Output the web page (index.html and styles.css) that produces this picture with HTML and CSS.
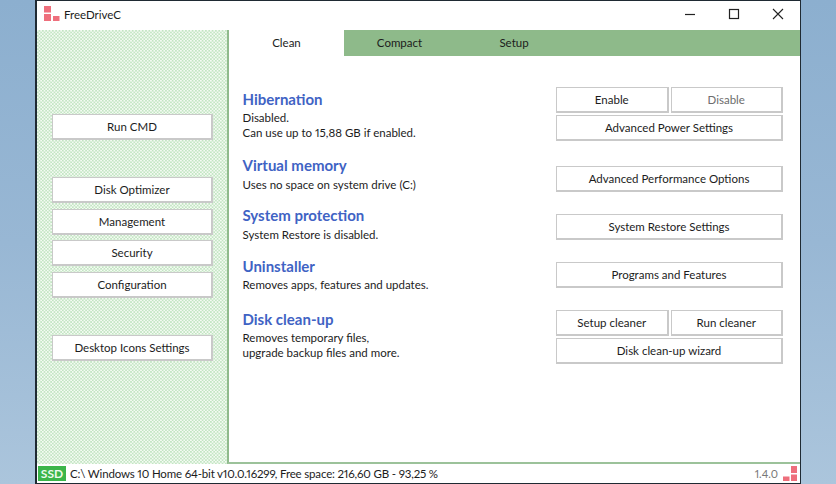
FILE: index.html
```html
<!DOCTYPE html>
<html lang="en">
<head>
<meta charset="utf-8">
<title>FreeDriveC</title>
<link rel="stylesheet" href="styles.css">
</head>
<body>
<div class="window">
  <header class="titlebar">
    <svg class="logo" width="16" height="16" viewBox="0 0 16 16"><path d="M0 0h7v6.500H0zM0 8h7v7H0zM9 10h6.500v5H9z" fill="#ee6f7c"/></svg>
    <span class="app-name">FreeDriveC</span>
    <div class="controls">
      <svg width="12" height="12" viewBox="0 0 12 12"><path d="M1 6.500h10" stroke="#222" stroke-width="1.200" fill="none"/></svg>
      <svg width="12" height="12" viewBox="0 0 12 12"><rect x="1.500" y="1.500" width="9" height="9" stroke="#222" stroke-width="1.200" fill="none"/></svg>
      <svg width="12" height="12" viewBox="0 0 12 12"><path d="M1 1l10 10M11 1L1 11" stroke="#222" stroke-width="1.100" fill="none"/></svg>
    </div>
  </header>
  <div class="body">
    <aside class="sidebar">
      <button class="btn side-btn first">Run CMD</button>
      <div class="side-group">
        <button class="btn side-btn">Disk Optimizer</button>
        <button class="btn side-btn">Management</button>
        <button class="btn side-btn">Security</button>
        <button class="btn side-btn">Configuration</button>
      </div>
      <button class="btn side-btn last">Desktop Icons Settings</button>
    </aside>
    <main class="main">
      <nav class="tabs">
        <span class="tab active">Clean</span>
        <span class="tab tab-compact">Compact</span>
        <span class="tab tab-setup">Setup</span>
      </nav>
      <div class="content">
        <div class="info">
          <section class="sec s1"><h2>Hibernation</h2><p>Disabled.<br>Can use up to 15,88 GB if enabled.</p></section>
          <section class="sec s2"><h2>Virtual memory</h2><p>Uses no space on system drive (C:)</p></section>
          <section class="sec s3"><h2>System protection</h2><p>System Restore is disabled.</p></section>
          <section class="sec s4"><h2>Uninstaller</h2><p>Removes apps, features and updates.</p></section>
          <section class="sec s5"><h2>Disk clean-up</h2><p>Removes temporary files,<br>upgrade backup files and more.</p></section>
        </div>
        <div class="actions">
          <div class="stack">
            <div class="pair"><button class="btn">Enable</button><button class="btn off">Disable</button></div>
            <button class="btn">Advanced Power Settings</button>
          </div>
          <button class="btn a2">Advanced Performance Options</button>
          <button class="btn a3">System Restore Settings</button>
          <button class="btn a4">Programs and Features</button>
          <div class="stack a5">
            <div class="pair"><button class="btn">Setup cleaner</button><button class="btn">Run cleaner</button></div>
            <button class="btn">Disk clean-up wizard</button>
          </div>
        </div>
      </div>
    </main>
  </div>
  <footer class="status">
    <span class="ssd">SSD</span>
    <span class="path">C:\ Windows 10 Home 64-bit v10.0.16299, Free space: 216,60 GB - 93,25 %</span>
    <span class="ver">1.4.0</span>
    <svg class="logo2" width="16" height="16" viewBox="0 0 16 16"><path d="M9 0h6v7H9zM9 8.500h6V15H9zM1 10.500h6.500V15H1z" fill="#ee6f7c"/></svg>
  </footer>
</div>
</body>
</html>
```
FILE: styles.css
```css
* { box-sizing: border-box; }
html, body { margin: 0; height: 100%; }
body {
  width: 836px;
  height: 484px;
  overflow: hidden;
  background: linear-gradient(180deg, #8cafcf 0%, #98b7d4 50%, #abc5dc 100%);
  padding-left: 35px;
  font-family: Lato, "Open Sans", sans-serif;
  font-size: 11.500px;
  font-variant-numeric: proportional-nums;
  color: #1c1c1c;
}
.window {
  width: 766px;
  height: 484px;
  background: #fff;
  border: 1px solid #1f2a33;
  border-width: 1px 1px 1px 2px;
  display: flex;
  flex-direction: column;
}
.titlebar {
  height: 29px;
  flex: none;
  display: flex;
  align-items: center;
  padding: 0 16px 3px 7px;
}
.logo { margin-right: 4px; }
.app-name { font-size: 11.500px; }
.controls {
  margin-left: auto;
  display: flex;
  gap: 32px;
  align-items: center;
}
.body { flex: 1; display: flex; min-height: 0; }
.sidebar {
  width: 190px;
  flex: none;
  display: flex;
  flex-direction: column;
  padding: 84px 14px 0 15px;
  background-color: #c3e5c3;
  background-image: radial-gradient(circle at 0.83px 0.83px, #f4fbf3 0.85px, transparent 1.050px),
    radial-gradient(circle at 2.500px 2.500px, #f4fbf3 0.85px, transparent 1.050px);
  background-size: 3.340px 3.340px;
}
.side-group { display: flex; flex-direction: column; gap: 5.670px; margin: 37px 0; }
.btn {
  font: inherit;
  color: inherit;
  background: #fff;
  border: 2px solid #c9c9c9;
  border-width: 1px 2px 2px 1px;
  height: 26px;
  padding: 0;
  display: block;
  width: 100%;
}
.side-btn { height: 26px; }
.main {
  flex: 1;
  display: flex;
  flex-direction: column;
  border-left: 2px solid #8fba8c;
  border-bottom: 2px solid #9cc29a;
}
.tabs {
  height: 26px;
  flex: none;
  background: #8eba8a;
  display: flex;
}
.tab { width: 115px; display: flex; align-items: center; justify-content: center; padding-bottom: 2px; }
.tab.active { background: #fff; }
.tab-compact { width: 111px; }
.tab-setup { width: 118px; }
.content {
  flex: 1;
  display: flex;
  justify-content: space-between;
  padding: 31px 17px 0 13px;
}
.sec h2 {
  margin: 0 0 1px;
  font-size: 15px;
  line-height: 20px;
  font-weight: 700;
  color: #3f63c4;
}
.sec p { margin: 0; line-height: 15px; }
.info { padding-top: 2px; padding-left: 0.5px; }
.s2 { margin-top: 15px; }
.s2 h2 { margin-bottom: 2px; }
.s3 { margin-top: 13px; }
.s3 h2 { margin-bottom: 2px; }
.s4 { margin-top: 14px; }
.s5 { margin-top: 17px; }
.actions { width: 227px; display: flex; flex-direction: column; }
.stack { display: flex; flex-direction: column; gap: 2px; }
.pair { display: flex; gap: 2px; }
.off { color: #6d6d6d; }
.a2 { margin-top: 25px; }
.a3 { margin-top: 22px; }
.a4 { margin-top: 22px; }
.a5 { margin-top: 22px; }
.status {
  height: 19px;
  flex: none;
  display: flex;
  align-items: center;
  padding-right: 2px;
  background: #fff;
}
.ssd {
  background: #3bb54a;
  color: #eefaee;
  width: 28px;
  height: 15px;
  margin-left: 1px;
  text-align: center;
  line-height: 15px;
  font-size: 12px;
  font-weight: 700;
}
.path { margin-left: 4px; letter-spacing: -0.17px; }
.ver { margin-left: auto; margin-right: 4px; color: #777; font-size: 11px; }
```
